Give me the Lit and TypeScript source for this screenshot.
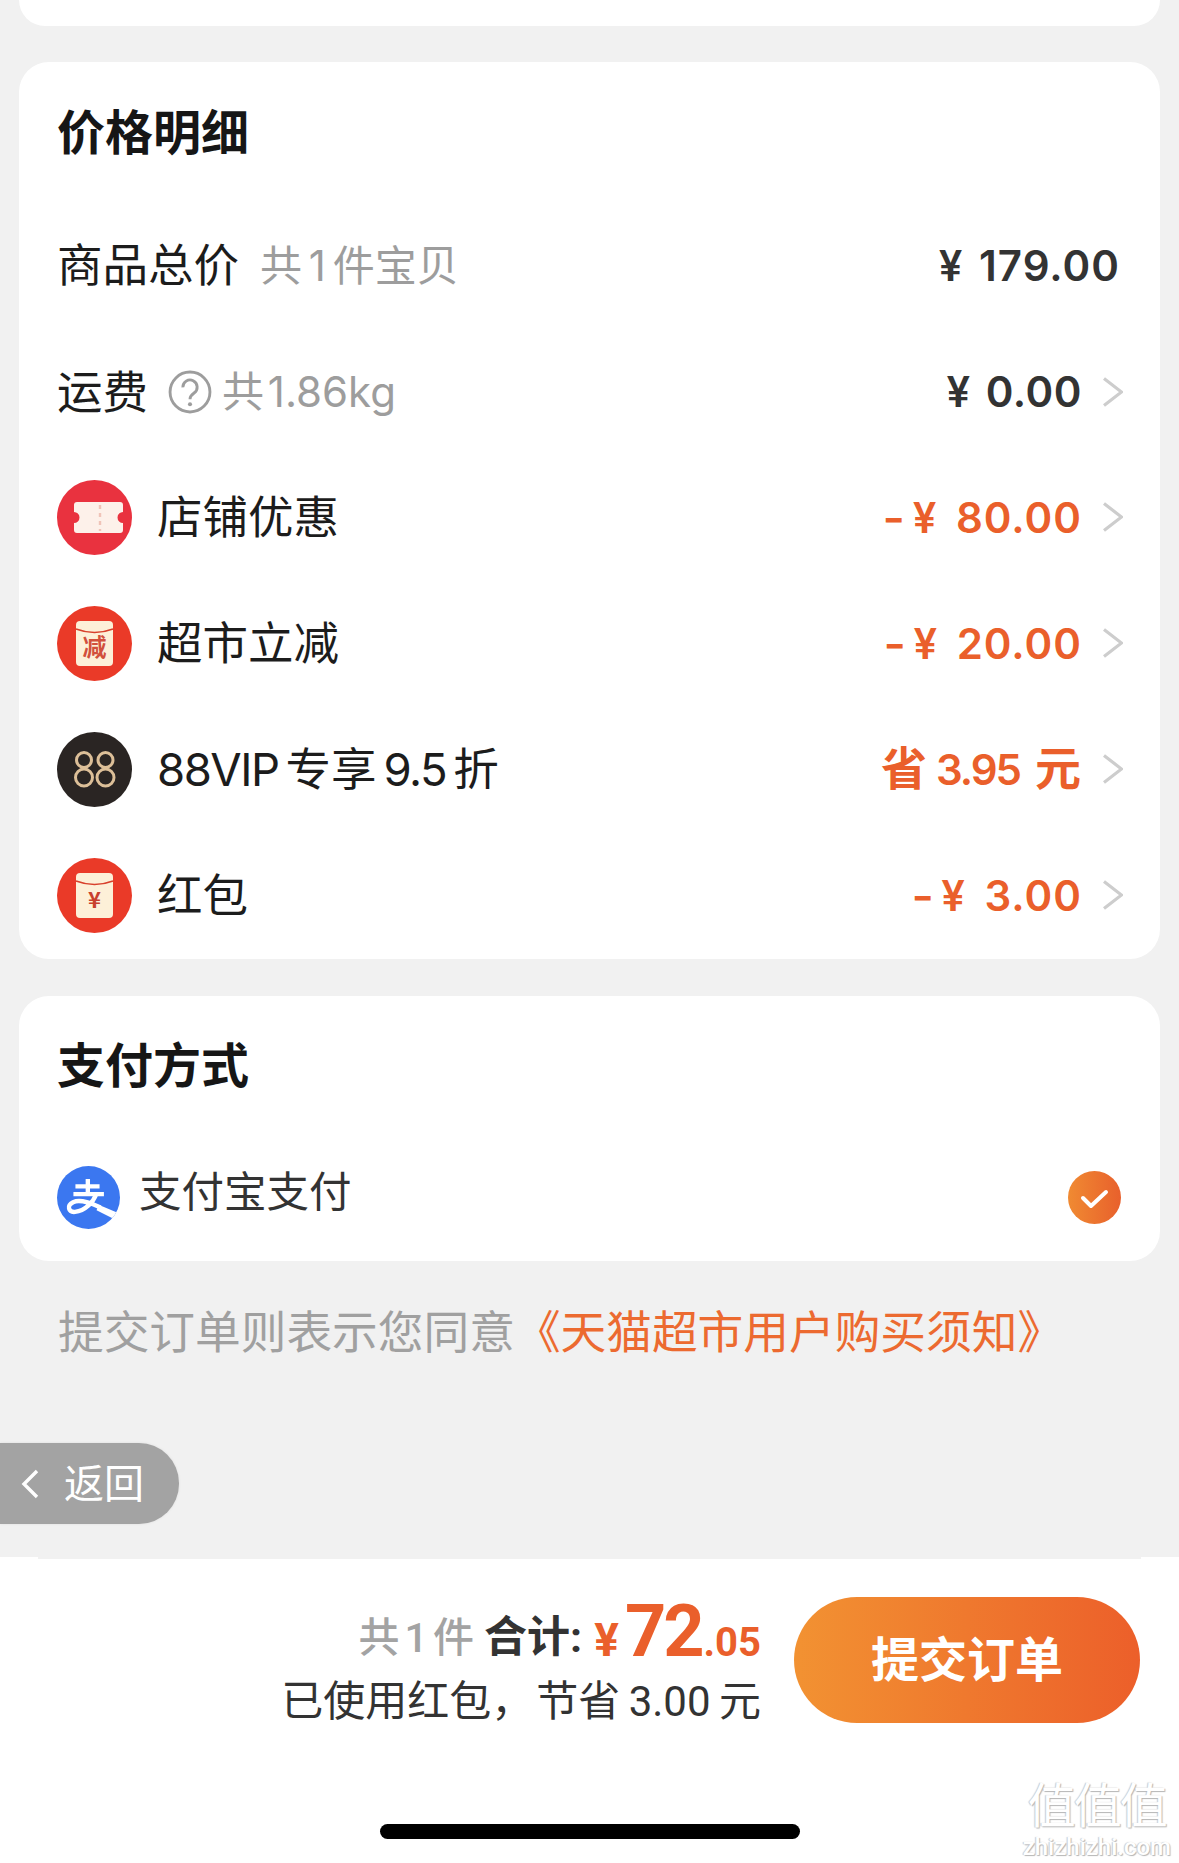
import { LitElement, html, css, svg } from "lit";
import { customElement } from "lit/decorators.js";

const chevron = html`<svg class="chev" viewBox="0 0 20 30"><path d="M1 1.5 L18.5 15 L1 28.5" fill="none" stroke="#cdcdcd" stroke-width="3.2"/></svg>`;

const ticket = svg`<circle cx="37.5" cy="37.5" r="37.5" fill="#e9323f"/>
<path d="M21 22 H63 a3 3 0 0 1 3 3 V32 a5.5 5.5 0 0 0 0 11 V50 a3 3 0 0 1 -3 3 H20 a3 3 0 0 1 -3 -3 V43 a5.5 5.5 0 0 0 0 -11 V25 a3 3 0 0 1 3 -3 Z" fill="#fdf1ea"/>
<path d="M43 25 V51" stroke="#f0c4b8" stroke-width="2.4" stroke-dasharray="4 4"/>`;

const envelope = (ch: string, size: number, color: string) => svg`<circle cx="37.5" cy="37.5" r="37.5" fill="#ea3a28"/>
<rect x="19" y="15" width="37" height="45" rx="4" fill="#fdf0d8"/>
<path d="M19 23 Q37.5 30 56 23" fill="none" stroke="#d8402c" stroke-width="1.6"/>
<text x="37.5" y="50" text-anchor="middle" font-size="${size}" font-weight="700" fill="${color}" font-family="Noto Sans CJK SC, sans-serif">${ch}</text>`;

const vip = svg`<circle cx="37.5" cy="37.5" r="37.5" fill="#2a2523"/>
<g fill="none" stroke="#dcbf98" stroke-width="3">
<circle cx="27" cy="28" r="7.5"/><circle cx="27" cy="45.5" r="8.5"/>
<circle cx="48.5" cy="28" r="7.5"/><circle cx="48.5" cy="45.5" r="8.5"/>
</g>`;

type Row = { icon?: unknown; label: unknown; sub?: string; help?: boolean; price: unknown; orange?: boolean; arrow: boolean };

const minus = (n: string) => html`<span class="sign">-</span>¥ ${n}`;

const rows: Row[] = [
  { label: "商品总价", sub: "共 1 件宝贝", price: "¥ 179.00", arrow: false },
  { label: "运费", sub: "共 1.86kg", help: true, price: "¥ 0.00", arrow: true },
  { icon: ticket, label: "店铺优惠", price: minus("80.00"), orange: true, arrow: true },
  { icon: envelope("减", 24, "#d2503c"), label: "超市立减", price: minus("20.00"), orange: true, arrow: true },
  {
    icon: vip,
    label: html`<span class="lat">88VIP</span><span class="cjk">专享</span><span class="lat">9.5</span><span class="cjk">折</span>`,
    price: html`<span class="pc first">省</span><span class="pn">3.95</span><span class="pc">元</span>`,
    orange: true,
    arrow: true,
  },
  { icon: envelope("¥", 22, "#c8402c"), label: "红包", price: minus("3.00"), orange: true, arrow: true },
];

@customElement("app-root")
export class AppRoot extends LitElement {
  static styles = css`
    :host {
      display: block;
      width: 1179px;
      height: 1863px;
      overflow: hidden;
      position: relative;
      background: #f1f1f1;
      font-family: "Inter", "Noto Sans CJK SC", sans-serif;
      color: #1c1c1c;
    }
    .page { display: flex; flex-direction: column; height: 100%; }
    .stub {
      height: 26px;
      margin: 0 19px;
      background: #fff;
      border-radius: 0 0 30px 30px;
    }
    .card {
      margin: 36px 19px 0;
      background: #fff;
      border-radius: 30px;
      padding: 0 38px;
    }
    .card.second { margin-top: 37px; }
    .title {
      height: 141px;
      display: flex;
      align-items: center;
      font-size: 48px;
      font-weight: 700;
      line-height: 1;
      color: #161616;
    }
    .card.second .title { height: 139px; }
    .row { height: 126px; display: flex; align-items: center; }
    .row.iconed:nth-child(4) { margin-top: -1px; }
    .row:nth-child(3) .price { letter-spacing: 0.5px; }
    .row:nth-child(n + 3) .label { margin-top: 2px; }
    .row:nth-child(n + 4) .price { margin-top: 1px; }
    .row:nth-child(6) .price { margin-top: -2px; }
    .rows-end { height: 1px; }
    .icon { width: 75px; height: 75px; flex: none; margin-right: 25px; }
    .label { font-size: 45.5px; line-height: 1; white-space: pre; }
    .lat { letter-spacing: -1.5px; }
    .cjk { margin: 0 7px 0 7px; }
    .sub { font-size: 42px; line-height: 1; color: #9d9d9d; white-space: pre; margin-left: 21px; word-spacing: -5px; }
    .help { width: 44px; height: 44px; flex: none; margin-left: 20px; }
    .help + .sub { margin-left: 10px; word-spacing: -8px; }
    .spacer { flex: 1; }
    .price {
      font-size: 42px;
      font-weight: 600;
      line-height: 1;
      letter-spacing: 1px;
      word-spacing: 4px;
      color: #333;
      white-space: pre;
      margin-right: 2px;
    }
    .price.orange { color: #ea5f2b; word-spacing: 7px; }
    .sign { display: inline-block; margin-right: 8px; transform: scaleX(1.15); }
    .pn { letter-spacing: -2px; }
    .pc { font-size: 46px; margin-left: 15px; }
    .pc.first { margin-left: 0; margin-right: 8px; }
    .chev { width: 20px; height: 30px; flex: none; margin-left: 19px; margin-right: -1px; }
    .pay { height: 124px; padding-bottom: 2px; display: flex; align-items: center; }
    .pay-logo { width: 63px; height: 63px; flex: none; margin-right: 19px; }
    .pay-text { font-size: 42.5px; line-height: 1; color: #333; margin-bottom: 10px; }
    .check { width: 53px; height: 53px; flex: none; margin-right: 1px; }
    .agree {
      margin-top: 42px;
      padding-left: 58px;
      height: 60px;
      display: flex;
      align-items: center;
      font-size: 45.7px;
      line-height: 1;
      color: #a0a0a0;
      white-space: pre;
    }
    .agree span { color: #ec6a30; }
    .fill { flex: 1; }
    .back {
      position: absolute;
      left: 0;
      top: 1443px;
      width: 179px;
      height: 81px;
      box-sizing: border-box;
      padding-left: 20px;
      border-radius: 0 40px 40px 0;
      background: #a3a3a3;
      box-shadow: 0 0 3px rgba(0, 0, 0, 0.08);
      display: flex;
      align-items: center;
      gap: 24px;
      color: #fff;
      font-size: 40px;
      line-height: 1;
    }
    .back svg { width: 20px; height: 32px; flex: none; }
    .footer {
      height: 306px;
      box-sizing: border-box;
      background: #fff;
      position: relative;
      padding: 40px 39px 0 0;
      display: flex;
      justify-content: flex-end;
      gap: 33px;
    }
    .footer::before {
      content: "";
      position: absolute;
      left: 38px;
      right: 38px;
      top: 0;
      height: 2px;
      background: #f1f1f1;
    }
    .sum { display: flex; flex-direction: column; align-items: flex-end; }
    .line1 {
      height: 70px;
      display: flex;
      align-items: baseline;
      font-family: "Roboto", "Noto Sans CJK SC", sans-serif;
      font-size: 40px;
      line-height: 70px;
      font-weight: 700;
      white-space: pre;
    }
    .count { color: #a3a3a3; font-weight: 500; word-spacing: -5px; font-size: 41px; transform: translateY(-4px); }
    .total { color: #333; margin-left: 10px; font-size: 43px; transform: translateY(-4px); }
    .yen { color: #ea5f2b; font-size: 46px; margin-left: 12px; }
    .big { color: #ea5f2b; font-size: 72px; margin-left: 6px; letter-spacing: -3px; }
    .cents { color: #ea5f2b; font-size: 40px; margin-left: 2px; }
    .line2 {
      margin-top: 11px;
      font-family: "Roboto", "Noto Sans CJK SC", sans-serif;
      font-size: 42px;
      line-height: 48px;
      color: #333;
      white-space: pre;
      word-spacing: -2px;
    }
    .comma { letter-spacing: 3px; }
    .submit {
      width: 346px;
      height: 126px;
      border-radius: 63px;
      background: linear-gradient(90deg, #f29232, #ec5f2a);
      color: #fff;
      font-size: 48px;
      font-weight: 700;
      line-height: 1;
      display: flex;
      align-items: center;
      justify-content: center;
      flex: none;
    }
    .home {
      position: absolute;
      left: 380px;
      top: 267px;
      width: 420px;
      height: 15px;
      border-radius: 7.5px;
      background: #000;
    }
    .mark {
      position: absolute;
      right: 8px;
      bottom: 3px;
      display: flex;
      flex-direction: column;
      align-items: center;
      color: #fff;
      text-shadow: 1px 1px 1px #b5b5b5, -1px 0 1px #c8c8c8;
    }
    .mark b { font-size: 48px; line-height: 56px; font-weight: 400; letter-spacing: -2px; }
    .mark i { font-family: "Roboto", sans-serif; font-style: normal; font-size: 24px; line-height: 26px; font-weight: 500; }
  `;

  private renderRow(r: Row) {
    return html`<div class="row ${r.icon ? "iconed" : ""}">
      ${r.icon ? html`<svg class="icon" viewBox="0 0 75 75">${r.icon}</svg>` : ""}
      <span class="label">${r.label}</span>
      ${r.help
        ? html`<svg class="help" viewBox="0 0 43 43">
            <circle cx="21.5" cy="21.5" r="19.5" fill="none" stroke="#9d9d9d" stroke-width="2.8"/>
            <path d="M14.5 17 a7 7 0 1 1 11 5.5 c-2.4 1.7 -4 3 -4 6" fill="none" stroke="#9d9d9d" stroke-width="2.8"/>
            <circle cx="21.5" cy="33.5" r="2" fill="#9d9d9d"/>
          </svg>`
        : ""}
      ${r.sub ? html`<span class="sub">${r.sub}</span>` : ""}
      <span class="spacer"></span>
      <span class="price ${r.orange ? "orange" : ""}">${r.price}</span>
      ${r.arrow ? chevron : ""}
    </div>`;
  }

  render() {
    return html`<div class="page">
      <div class="stub"></div>
      <section class="card">
        <div class="title">价格明细</div>
        ${rows.map((r) => this.renderRow(r))}
        <div class="rows-end"></div>
      </section>
      <section class="card second">
        <div class="title">支付方式</div>
        <div class="pay">
          <svg class="pay-logo" viewBox="0 0 188 188">
            <defs><clipPath id="pc"><circle cx="94" cy="94" r="94"/></clipPath></defs>
            <circle cx="94" cy="94" r="94" fill="#3b77f0"/>
            <g clip-path="url(#pc)" fill="none" stroke="#fff" stroke-width="13">
              <path d="M55 61 H127"/>
              <path d="M49 84 H140"/>
              <path d="M92 39 V84"/>
              <path d="M117 84 C108 108 84 134 54 137 C34 139 28 118 48 108 C72 97 108 114 130 124"/>
            </g>
            <path clip-path="url(#pc)" d="M124 116 L196 146 L190 168 L118 132 Z" fill="#fff"/>
          </svg>
          <span class="pay-text">支付宝支付</span>
          <span class="spacer"></span>
          <svg class="check" viewBox="0 0 53 53">
            <defs><linearGradient id="cg" x1="0" x2="1" y1="0" y2="0"><stop offset="0" stop-color="#f08a32"/><stop offset="1" stop-color="#e8602c"/></linearGradient></defs>
            <circle cx="26.5" cy="26.5" r="26.5" fill="url(#cg)"/>
            <path d="M15 27 L23 35 L38 21" fill="none" stroke="#fff" stroke-width="4" stroke-linecap="round" stroke-linejoin="round"/>
          </svg>
        </div>
      </section>
      <div class="agree">提交订单则表示您同意<span>《天猫超市用户购买须知》</span></div>
      <div class="fill"></div>
      <footer class="footer">
        <div class="sum">
          <div class="line1"><span class="count">共 1 件</span><span class="total">合计:</span><span class="yen">¥</span><span class="big">72</span><span class="cents">.05</span></div>
          <div class="line2">已使用红包<span class="comma">，</span>节省 3.00 元</div>
        </div>
        <div class="submit">提交订单</div>
        <div class="home"></div>
        <div class="mark"><b>值值值</b><i>zhizhizhi.com</i></div>
      </footer>
    </div>
    <div class="back">
      <svg viewBox="0 0 20 32"><path d="M17 3 L4 16 L17 29" fill="none" stroke="#fff" stroke-width="3.4"/></svg>
      <span>返回</span>
    </div>`;
  }
}
